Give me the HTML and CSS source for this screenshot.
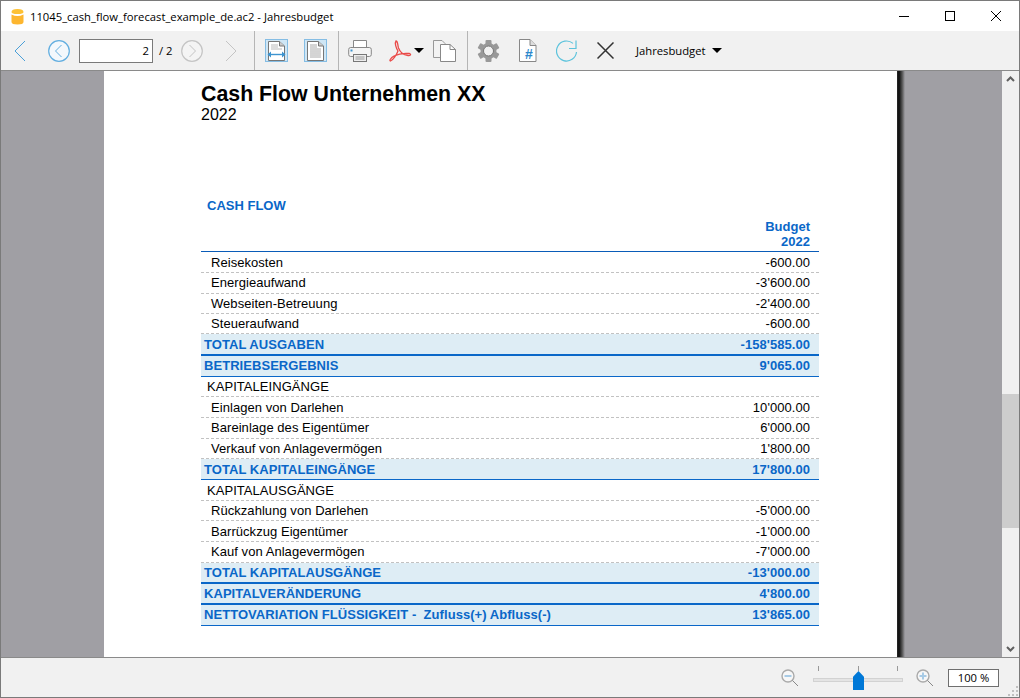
FILE: index.html
```html
<!DOCTYPE html>
<html lang="de">
<head>
  <meta charset="UTF-8">
  <title>11045_cash_flow_forecast_example_de.ac2 - Jahresbudget</title>
  <link rel="stylesheet" href="styles.css">
</head>
<body>
<div class="window">

  <div class="titlebar">
    <svg class="app-icon" width="13" height="17" viewBox="0 0 13 17">
      <path d="M.5 4 Q.5 1 6.5 1 Q12.5 1 12.5 4 Q12.5 6 6.5 6 Q.5 6 .5 4 Z" fill="#fdc134"/>
      <path d="M.5 6.5 Q6.5 9.5 12.5 6.5 V14 Q12.5 16.5 6.5 16.5 Q.5 16.5 .5 14 Z" fill="#fdb62f"/>
    </svg>
    <span class="title">11045_cash_flow_forecast_example_de.ac2 - Jahresbudget</span>
    <div class="win-buttons">
      <svg width="12" height="12" viewBox="0 0 12 12"><path d="M1 6.5 H11" stroke="#000" fill="none"/></svg>
      <svg width="12" height="12" viewBox="0 0 12 12"><rect x="1.5" y="1.5" width="9" height="9" stroke="#000" fill="none"/></svg>
      <svg width="12" height="12" viewBox="0 0 12 12"><path d="M1 1 L11 11 M11 1 L1 11" stroke="#000" fill="none"/></svg>
    </div>
  </div>

  <div class="toolbar">
    <svg class="tb-prev" width="12" height="22" viewBox="0 0 12 22"><path d="M11 1 L1 11 L11 21" stroke="#4a9fd8" fill="none"/></svg>
    <svg class="tb-circle" width="22" height="22" viewBox="0 0 22 22"><circle cx="11" cy="11" r="10.3" stroke="#62aee0" fill="#f3f8fc" stroke-width="1.2"/><path d="M13.5 5 L7.5 11 L13.5 17" stroke="#62aee0" fill="none"/></svg>
    <div class="page-input">2</div>
    <span class="page-total">/ 2</span>
    <svg class="tb-circle2" width="22" height="22" viewBox="0 0 22 22"><circle cx="11" cy="11" r="10.3" stroke="#c4c4c4" fill="#f4f4f4" stroke-width="1.2"/><path d="M8.5 5 L14.5 11 L8.5 17" stroke="#c4c4c4" fill="none"/></svg>
    <svg class="tb-next" width="12" height="22" viewBox="0 0 12 22"><path d="M1 1 L11 11 L1 21" stroke="#c4c4c4" fill="none"/></svg>
    <div class="sep sep1"></div>
    <div class="toggle">
      <svg width="19" height="20" viewBox="0 0 19 20"><path d="M1.5 .5 H12.5 L17.5 5 V19.5 H1.5 Z" fill="#fff" stroke="#777"/><path d="M12.5 .5 V5 H17.5" fill="#ccc" stroke="#777"/><path d="M4 4 H11 M4 6 H11 M4 8 H15" stroke="#bbb"/><path d="M1 13.5 H18" stroke="#3d94d0" stroke-width="1.4"/><path d="M.5 13.5 L4 10.5 V16.5 Z M18.5 13.5 L15 10.5 V16.5 Z" fill="#3d94d0"/></svg>
    </div>
    <div class="toggle toggle2">
      <svg width="19" height="20" viewBox="0 0 19 20"><path d="M1.5 .5 H12.5 L17.5 5 V19.5 H1.5 Z" fill="#fff" stroke="#777"/><path d="M12.5 .5 V5 H17.5" fill="#ccc" stroke="#777"/><path d="M4 4 H11 M4 6 H11 M4 8 H15 M4 10 H15 M4 12 H15 M4 14 H15 M4 16 H15" stroke="#aaa"/></svg>
    </div>
    <div class="sep sep2"></div>
    <svg class="tb-print" width="24" height="22" viewBox="0 0 24 22"><path d="M5.5 7 V.5 H18.5 V7" fill="#fff" stroke="#888"/><rect x=".7" y="7.5" width="22.6" height="9" rx="2" fill="#f4f4f4" stroke="#888"/><rect x="5.5" y="14.5" width="13" height="7" fill="#ededed" stroke="#777"/><path d="M7.5 17 H16.5 M7.5 19 H16.5" stroke="#999"/><rect x="2.5" y="9.5" width="2" height="2" fill="#3d94d0"/></svg>
    <svg class="tb-pdf" width="23" height="22" viewBox="0 0 23 22"><path d="M7 1 C5.5 3 7 8 9 11 C7.5 15 4 20 1.5 21 C0 21 1.5 18 5 16 C9 14 15 13 20 13.5 C22.5 14 22 16 19 15.5 C15 15 11 12 9.5 8 C8.5 5 9 1 7 1 Z" fill="none" stroke="#ea4a48" stroke-width="1.3"/></svg>
    <div class="arrow arrow-pdf"></div>
    <svg class="tb-copy" width="23" height="22" viewBox="0 0 23 22"><path d="M.5 17.5 V.5 H9 L12 3.5 V17.5 Z" fill="#f3f3f3" stroke="#999"/><path d="M7.5 21.5 V4.5 H17 L22.5 9.5 V21.5 Z" fill="#fff" stroke="#888"/><path d="M17 4.5 V9.5 H22.5" fill="none" stroke="#888"/></svg>
    <div class="sep sep3"></div>
    <svg class="tb-gear" width="23" height="22" viewBox="0 0 23 22">
      <g fill="#999">
        <rect x="8.5" y="0" width="6" height="22" rx="1"/>
        <rect x="8.5" y="0" width="6" height="22" rx="1" transform="rotate(60 11.5 11)"/>
        <rect x="8.5" y="0" width="6" height="22" rx="1" transform="rotate(120 11.5 11)"/>
      </g>
      <circle cx="11.5" cy="11" r="8" fill="#999"/>
      <circle cx="11.5" cy="11" r="5" fill="#f1f1f1" stroke="#777"/>
    </svg>
    <svg class="tb-file" width="18" height="23" viewBox="0 0 18 23"><path d="M.5 .5 H11 L17 6.5 V22.5 H.5 Z" fill="#fff" stroke="#888"/><path d="M11 .5 V6.5 H17" fill="#ddd" stroke="#888"/><text x="10" y="20" class="hash">#</text></svg>
    <svg class="tb-refresh" width="22" height="22" viewBox="0 0 22 22"><path d="M20.5 12 A10 10 0 1 1 17 3.4" stroke="#5cc3dc" fill="none" stroke-width="1.2"/><path d="M20 .5 V8.5 H13" stroke="#5cc3dc" fill="none" stroke-width="1.2"/></svg>
    <svg class="tb-stop" width="17" height="17" viewBox="0 0 17 17"><path d="M.5 .5 L16.5 16.5 M16.5 .5 L.5 16.5" stroke="#333" stroke-width="1.5" fill="none"/></svg>
    <span class="tb-label">Jahresbudget</span>
    <div class="arrow arrow-label"></div>
  </div>

  <div class="viewer">
    <div class="canvas">
      <div class="page">
        <h1>Cash Flow Unternehmen XX</h1>
        <div class="year">2022</div>
        <div class="report-title">CASH FLOW</div>
        <div class="col-head">Budget<br>2022</div>
        <div class="rows">
          <div class="row line tight"><span>Reisekosten</span><span>-600.00</span></div>
          <div class="row line tight"><span>Energieaufwand</span><span>-3'600.00</span></div>
          <div class="row line tight"><span>Webseiten-Betreuung</span><span>-2'400.00</span></div>
          <div class="row line tight"><span>Steueraufwand</span><span>-600.00</span></div>
          <div class="row total thick first-total"><span>TOTAL AUSGABEN</span><span>-158'585.00</span></div>
          <div class="row total"><span>BETRIEBSERGEBNIS</span><span>9'065.00</span></div>
          <div class="row section"><span>KAPITALEINGÄNGE</span></div>
          <div class="row line"><span>Einlagen von Darlehen</span><span>10'000.00</span></div>
          <div class="row line"><span>Bareinlage des Eigentümer</span><span>6'000.00</span></div>
          <div class="row line"><span>Verkauf von Anlagevermögen</span><span>1'800.00</span></div>
          <div class="row total"><span>TOTAL KAPITALEINGÄNGE</span><span>17'800.00</span></div>
          <div class="row section"><span>KAPITALAUSGÄNGE</span></div>
          <div class="row line"><span>Rückzahlung von Darlehen</span><span>-5'000.00</span></div>
          <div class="row line"><span>Barrückzug Eigentümer</span><span>-1'000.00</span></div>
          <div class="row line"><span>Kauf von Anlagevermögen</span><span>-7'000.00</span></div>
          <div class="row total thick"><span>TOTAL KAPITALAUSGÄNGE</span><span>-13'000.00</span></div>
          <div class="row total thick"><span>KAPITALVERÄNDERUNG</span><span>4'800.00</span></div>
          <div class="row total"><span>NETTOVARIATION FLÜSSIGKEIT -&nbsp; Zufluss(+) Abfluss(-)</span><span>13'865.00</span></div>
        </div>
      </div>
      <div class="page-shadow"></div>
    </div>
    <div class="scrollbar">
      <svg width="17" height="17" viewBox="0 0 17 17"><path d="M5 10 L8.5 6.5 L12 10" stroke="#606060" stroke-width="2" fill="none"/></svg>
      <div class="track"><div class="thumb"></div></div>
      <svg width="17" height="17" viewBox="0 0 17 17"><path d="M5 7 L8.5 10.5 L12 7" stroke="#606060" stroke-width="2" fill="none"/></svg>
    </div>
  </div>

  <div class="statusbar">
    <svg class="zoom-out" width="18" height="18" viewBox="0 0 18 18"><circle cx="7" cy="7" r="6" fill="#f7f7f7" stroke="#aaa" stroke-width="1.4"/><path d="M3.5 7 H10.5" stroke="#a8cbe6" stroke-width="2"/><path d="M11.5 11.5 L17 17" stroke="#888"/></svg>
    <div class="slider">
      <div class="ticks"><i></i><i></i><i></i></div>
      <div class="slider-track"></div>
      <div class="slider-thumb"></div>
    </div>
    <svg class="zoom-in" width="18" height="18" viewBox="0 0 18 18"><circle cx="7" cy="7" r="6" fill="#f7f7f7" stroke="#aaa" stroke-width="1.4"/><path d="M3.5 7 H10.5 M7 3.5 V10.5" stroke="#a8cbe6" stroke-width="2"/><path d="M11.5 11.5 L17 17" stroke="#888"/></svg>
    <div class="zoom-value">100 %</div>
    <svg class="grip" width="10" height="10" viewBox="0 0 10 10"><path d="M8 0h2v2H8z M4 4h2v2H4z M8 4h2v2H8z M0 8h2v2H0z M4 8h2v2H4z M8 8h2v2H8z" fill="#c0c0c0"/></svg>
  </div>
</div>
</body>
</html>
```

FILE: styles.css
```css
* {
  box-sizing: border-box;
}
html, body {
  margin: 0;
  padding: 0;
}
body {
  font-family: "Liberation Sans", Arial, sans-serif;
  overflow: hidden;
}
.window {
  width: 1020px;
  height: 698px;
  display: flex;
  flex-direction: column;
  border: 1px solid #7a7a7a;
  background: #fff;
}
.titlebar {
  height: 30px;
  flex: none;
  display: flex;
  align-items: center;
  padding-left: 10px;
  background: #fff;
}
.app-icon {
  margin-right: 6px;
}
.title, .page-input, .page-total, .tb-label, .zoom-value {
  font-family: "Open Sans", "Noto Sans", sans-serif;
  font-size: 11.25px;
  color: #000;
}
.win-buttons {
  margin-left: auto;
  display: flex;
  gap: 34px;
  padding-right: 17px;
}
.toolbar {
  height: 40px;
  flex: none;
  display: flex;
  align-items: center;
  background: #f1f1f1;
  border-bottom: 1px solid #8a8a8a;
}
.tb-prev { margin-left: 13px; }
.tb-circle { margin-left: 22px; }
.page-input {
  width: 74px;
  height: 24px;
  margin-left: 9px;
  padding: 3px 3px 0 0;
  border: 1px solid #7a7a7a;
  background: #fff;
  text-align: right;
}
.page-total {
  width: 22px;
  margin-left: 6px;
}
.tb-next { margin-left: 22px; }
.sep {
  width: 1px;
  height: 39px;
  background: #b5b5b5;
}
.sep1 { margin-left: 17px; }
.toggle {
  width: 23px;
  height: 23px;
  margin-left: 10px;
  display: flex;
  align-items: center;
  justify-content: center;
  background: #cfe6f5;
  border: 1px solid #85bde4;
}
.toggle2 { margin-left: 16px; }
.sep2 { margin-left: 11px; }
.tb-print { margin-left: 9px; }
.tb-pdf { margin-left: 17px; }
.arrow {
  width: 0;
  height: 0;
  border-left: 5px solid transparent;
  border-right: 5px solid transparent;
  border-top: 5px solid #000;
}
.arrow-pdf { margin-left: 2px; }
.tb-copy { margin-left: 9px; }
.sep3 { margin-left: 11px; }
.tb-gear { margin-left: 9px; }
.tb-file { margin-left: 19px; }
.hash {
  font-family: "Liberation Sans", sans-serif;
  font-size: 14px;
  font-weight: bold;
  fill: #2c87cc;
  text-anchor: middle;
}
.tb-refresh { margin-left: 19px; }
.tb-stop { margin-left: 19px; }
.tb-label { margin-left: 22px; }
.arrow-label { margin-left: 6px; }
.viewer {
  flex: 1;
  min-height: 0;
  display: flex;
}
.canvas {
  flex: 1;
  min-width: 0;
  display: flex;
  background: #a09fa4;
  overflow: hidden;
  padding-left: 103px;
}
.page {
  width: 793px;
  height: 100%;
  padding: 11px 78px 0 97px;
  background: #fff;
}
.page-shadow {
  width: 8px;
  background: linear-gradient(to right, #2a2a2a, #0c0c0c 25%, #555 65%, #a09fa4);
}
h1 {
  margin: 0;
  font-size: 21.33px;
  line-height: 24px;
  font-weight: bold;
  color: #000;
}
.year {
  font-size: 16px;
  line-height: 17px;
  color: #000;
}
.report-title {
  margin: 75px 0 0 6px;
  font-size: 13px;
  line-height: 15px;
  font-weight: bold;
  color: #0a67c8;
}
.col-head {
  margin-top: 6px;
  padding-right: 9px;
  text-align: right;
  font-size: 13px;
  line-height: 15px;
  font-weight: bold;
  color: #0a67c8;
}
.rows {
  border-top: 1px solid #0a5cb8;
  margin-top: 2px;
  padding-top: 1px;
}
.row {
  display: flex;
  justify-content: space-between;
  height: 20.6px;
  align-items: center;
  padding: 0 9px 0 10px;
  font-size: 13px;
  letter-spacing: .05px;
  color: #000;
  border-bottom: 1px dashed #c2c2c2;
}
.tight {
  height: 20.3px;
}
.total {
  height: 21px;
  padding-left: 3px;
  background: #deedf5;
  color: #0a67c8;
  font-weight: bold;
  border-bottom: 1px solid #0a67c8;
}
.first-total {
  height: 21.7px;
}
.thick {
  border-bottom-width: 2px;
}
.section {
  padding-left: 6px;
}
.scrollbar {
  width: 17px;
  flex: none;
  display: flex;
  flex-direction: column;
  background: #f0f0f0;
}
.track {
  flex: 1;
  display: flex;
  flex-direction: column;
  justify-content: flex-end;
  padding-bottom: 112px;
}
.thumb {
  height: 134px;
  background: #cdcdcd;
}
.statusbar {
  height: 40px;
  flex: none;
  display: flex;
  align-items: center;
  background: #f1f1f1;
  border-top: 1px solid #8a8a8a;
  position: relative;
}
.zoom-out { margin-left: 780px; }
.slider {
  width: 90px;
  height: 29px;
  margin-left: 14px;
  position: relative;
}
.ticks {
  display: flex;
  justify-content: space-between;
  padding: 3px 5px 0;
}
.ticks i {
  width: 1px;
  height: 5px;
  background: #999;
}
.slider-track {
  height: 4px;
  margin-top: 7px;
  background: #e4e4e4;
  border: 1px solid #d2d2d2;
}
.slider-thumb {
  position: absolute;
  left: 40px;
  top: 8px;
  width: 11px;
  height: 19px;
  background: #0078d7;
  clip-path: polygon(50% 0, 100% 30%, 100% 100%, 0 100%, 0 30%);
}
.zoom-in { margin-left: 13px; }
.zoom-value {
  width: 51px;
  height: 18px;
  margin-left: 14px;
  border: 1px solid #6f6f6f;
  background: #fff;
  text-align: center;
  line-height: 16px;
}
.grip {
  position: absolute;
  right: 1px;
  bottom: 1px;
}
```
